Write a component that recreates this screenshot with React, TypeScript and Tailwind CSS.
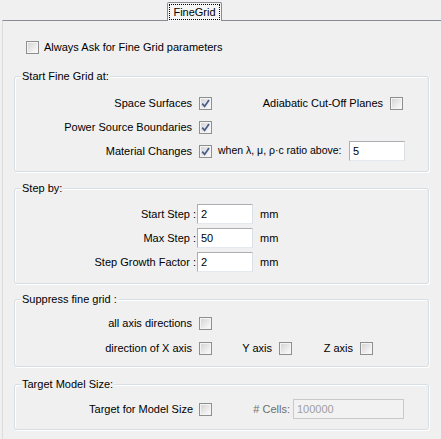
import React from "react";

const Check = ({ checked = false }: { checked?: boolean }) => (
  <span className="flex h-[13px] w-[13px] shrink-0 items-center justify-center border border-[#8e8f8f] bg-white">
    <span className="flex h-[11px] w-[11px] items-center justify-center border border-[#f4f4f4] bg-gradient-to-br from-[#d6d6d6] to-[#fafafa]">
      {checked && (
        <svg width="9" height="9" viewBox="0 0 9 9">
          <path
            d="M1.2 4.6 L3.6 7.4 L8 1"
            fill="none"
            stroke="#4a5e8a"
            strokeWidth="1.8"
          />
        </svg>
      )}
    </span>
  </span>
);

const TextBox = ({
  value,
  width,
  disabled = false,
}: {
  value: string;
  width: string;
  disabled?: boolean;
}) => (
  <div
    className={`flex h-[20px] shrink-0 items-center border pl-[3px] ${width} ${
      disabled
        ? "border-[#c9c9c9] bg-[#f2f2f2] text-[#a0a0a0]"
        : "border-[#abadb3] border-b-[#e3e9ef] border-r-[#dbdfe6] bg-white text-black"
    }`}
  >
    {value}
  </div>
);

const Group = ({
  title,
  height,
  className,
  children,
}: {
  title: string;
  height: string;
  className: string;
  children: React.ReactNode;
}) => (
  <div
    className={`relative ml-[11px] w-[415px] rounded-[3px] border border-[#d5dfe5] shadow-[inset_1px_1px_0_#ffffff,1px_1px_0_#ffffff] ${height} ${className}`}
  >
    <span className="absolute left-[6px] top-[-8px] bg-[#f0f0f0] px-[1px] leading-[14px]">
      {title}
    </span>
    {children}
  </div>
);

const Label = ({ children, width }: { children: React.ReactNode; width: string }) => (
  <span className={`shrink-0 whitespace-nowrap text-right ${width}`}>{children}</span>
);

export default function App() {
  return (
    <div className="h-[439px] w-[441px] overflow-hidden bg-[#f0f0f0] font-['Liberation_Sans',Arial,sans-serif] text-[11px] text-black">
      {/* tab strip */}
      <div className="flex h-[20px]">
        <div className="relative z-10 ml-[167px] mt-[2px] flex h-[19px] w-[55px] items-start justify-center rounded-t-[2px] border-x border-t border-[#898c95] bg-[#f5f5f5] pt-[1px]">
          <span className="border border-dotted border-black px-[3px] leading-[14px]">
            FineGrid
          </span>
        </div>
      </div>

      {/* tab page */}
      <div className="ml-[2px] h-[419px] border-l border-t border-l-[#dcdcdc] border-t-[#898c95]">
        <div className="mt-[20px] flex h-[13px] items-center pl-[23px]">
          <Check />
          <span className="ml-[5px]">Always Ask for Fine Grid parameters</span>
        </div>

        <Group title="Start Fine Grid at:" height="h-[96px]" className="mt-[22px] pt-[14px]">
          <div className="flex h-[24px] items-center">
            <Label width="w-[177px]">Space Surfaces</Label>
            <span className="ml-[7px]">
              <Check checked />
            </span>
            <Label width="w-[171px]">Adiabatic Cut-Off Planes</Label>
            <span className="ml-[7px]">
              <Check />
            </span>
          </div>
          <div className="flex h-[24px] items-center">
            <Label width="w-[177px]">Power Source Boundaries</Label>
            <span className="ml-[7px]">
              <Check checked />
            </span>
          </div>
          <div className="flex h-[24px] items-center">
            <Label width="w-[177px]">Material Changes</Label>
            <span className="ml-[7px]">
              <Check checked />
            </span>
            <span className="ml-[6px] w-[131px] shrink-0 whitespace-nowrap text-[10.5px]">
              when λ, μ, ρ·c ratio above:
            </span>
            <TextBox value="5" width="w-[56px]" />
          </div>
        </Group>

        <Group title="Step by:" height="h-[96px]" className="mt-[16px] pt-[13px]">
          {[
            ["Start Step :", "2"],
            ["Max Step :", "50"],
            ["Step Growth Factor :", "2"],
          ].map(([label, value]) => (
            <div key={label} className="flex h-[24px] items-center">
              <Label width="w-[181px]">{label}</Label>
              <span className="ml-[1px]">
                <TextBox value={value} width="w-[56px]" />
              </span>
              <span className="ml-[7px]">mm</span>
            </div>
          ))}
        </Group>

        <Group title="Suppress fine grid :" height="h-[68px]" className="mt-[15px] pt-[11px]">
          <div className="flex h-[24px] items-center">
            <Label width="w-[177px]">all axis directions</Label>
            <span className="ml-[7px]">
              <Check />
            </span>
          </div>
          <div className="mt-[1px] flex h-[24px] items-center">
            <Label width="w-[177px]">direction of X axis</Label>
            <span className="ml-[7px]">
              <Check />
            </span>
            <Label width="w-[60px]">Y axis</Label>
            <span className="ml-[7px]">
              <Check />
            </span>
            <Label width="w-[61px]">Z axis</Label>
            <span className="ml-[7px]">
              <Check />
            </span>
          </div>
        </Group>

        <Group title="Target Model Size:" height="h-[46px]" className="mt-[17px] pt-[12px]">
          <div className="flex h-[24px] items-center">
            <Label width="w-[178px]">Target for Model Size</Label>
            <span className="ml-[6px]">
              <Check />
            </span>
            <span className="w-[78px] shrink-0 text-right text-[#6d6d6d]"># Cells:</span>
            <span className="ml-[3px]">
              <TextBox value="100000" width="w-[111px]" disabled />
            </span>
          </div>
        </Group>
      </div>
    </div>
  );
}
